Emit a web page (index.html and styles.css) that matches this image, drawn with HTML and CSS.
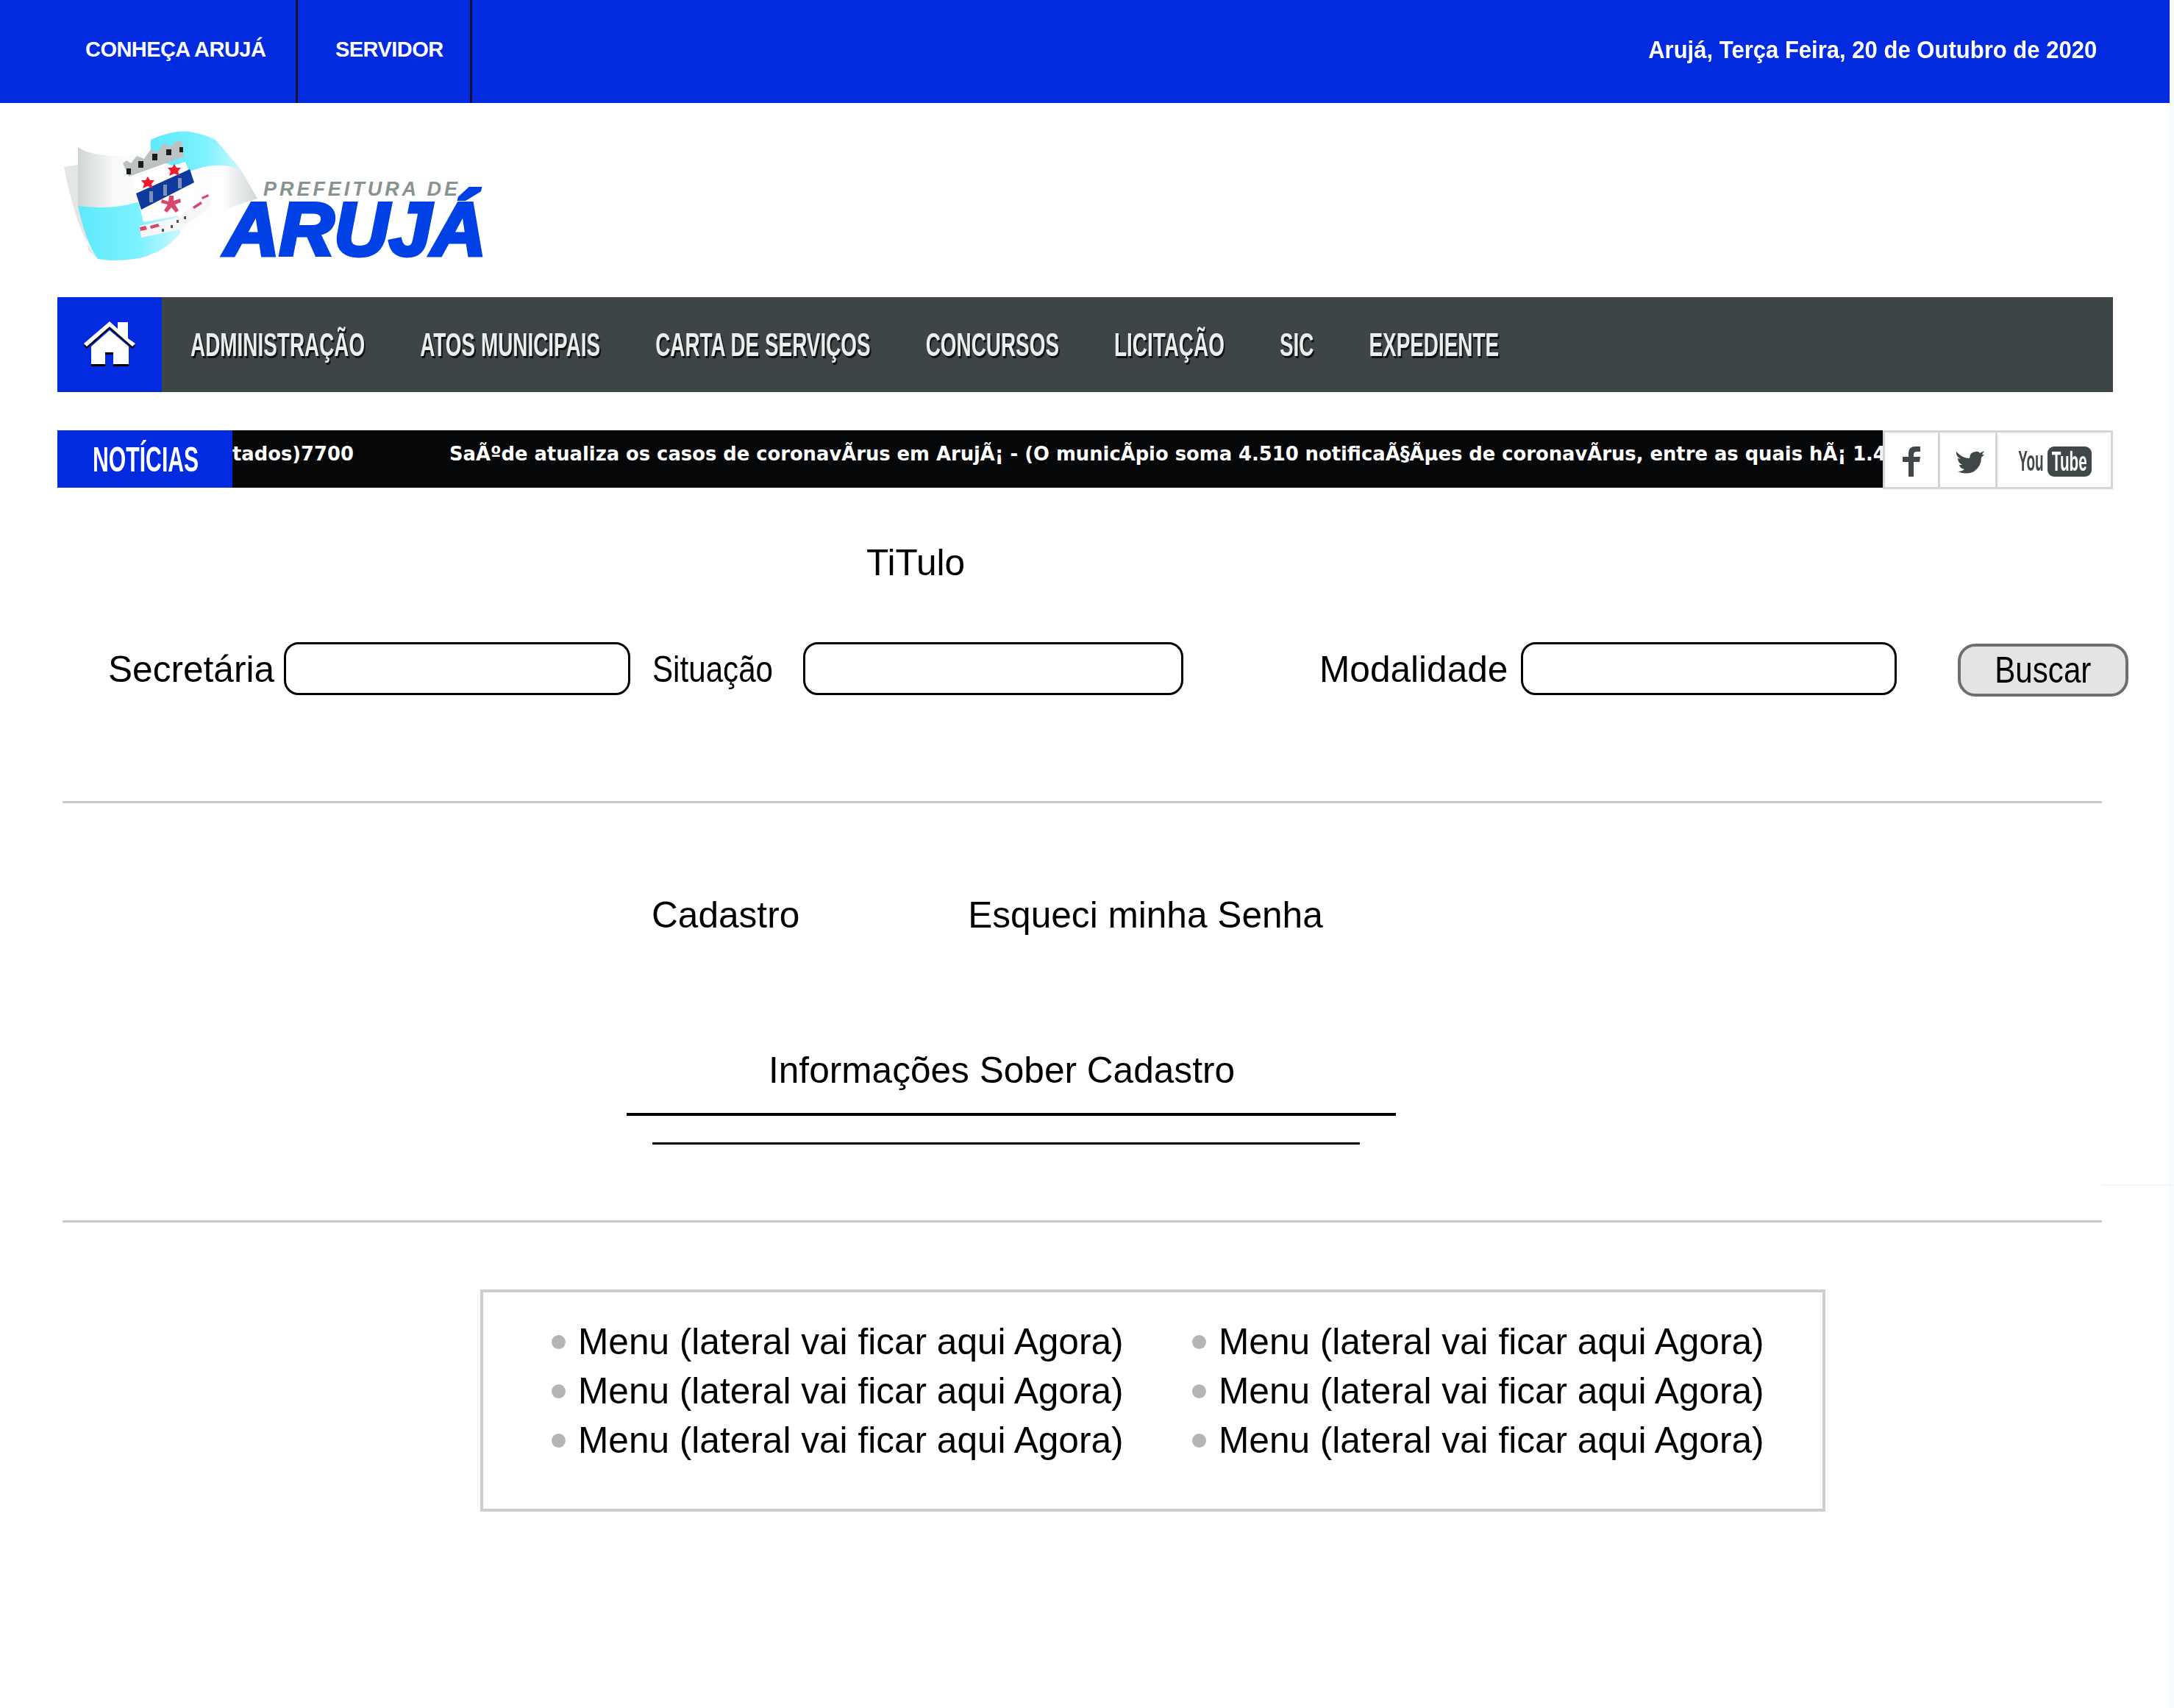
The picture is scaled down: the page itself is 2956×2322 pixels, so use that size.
FILE: index.html
```html
<!DOCTYPE html>
<html lang="pt-BR">
<head>
<meta charset="utf-8">
<title>Prefeitura de Arujá</title>
<link rel="stylesheet" href="styles.css">
</head>
<body>
<div class="faint-line"></div>
<header class="topbar">
  <a class="top-link first">CONHEÇA ARUJÁ</a>
  <a class="top-link second">SERVIDOR</a>
  <span class="top-date">Arujá, Terça Feira, 20 de Outubro de 2020</span>
</header>

<div class="logo-area">
  <svg class="logo" viewBox="80 170 590 200" width="590" height="200">
    <defs>
      <linearGradient id="wg" x1="0" x2="1" y1="0" y2="0">
        <stop offset="0" stop-color="#cfd4d4"/><stop offset=".2" stop-color="#f8f9f9"/><stop offset=".8" stop-color="#ffffff"/><stop offset="1" stop-color="#cfd6d6"/>
      </linearGradient>
      <linearGradient id="cg" x1="0" x2="1" y1="0" y2="0">
        <stop offset="0" stop-color="#5ceafc"/><stop offset=".6" stop-color="#7df1ff"/><stop offset="1" stop-color="#c8f8ff"/>
      </linearGradient>
    </defs>
    <path d="M87 227 L106 224 L120 340 L133 352 Q105 320 87 227Z" fill="#e3e6e6"/>
    <path d="M106 200 Q125 214 180 212 Q205 205 205 190 L253 179 L293 190 L327 230 L350 270 Q315 280 267 303 Q250 312 245 317 Q225 340 207 345 Q190 354 150 354 L133 352 Q118 335 106 280Z" fill="url(#wg)"/>
    <path d="M205 190 Q235 176 258 179 Q282 184 293 190 L327 230 Q295 218 258 233 L205 215Z" fill="url(#cg)"/>
    <path d="M106 280 Q150 286 187 275 L243 292 L245 317 Q225 340 207 345 Q190 354 150 354 L133 352 Q117 330 106 280Z" fill="url(#cg)"/>
    <path d="M180 242 L252 220 L270 267 L243 293 L195 302Z" fill="#ffffff"/>
    <path d="M167 222 L172 218 L178 222 L186 212 L196 216 L205 203 L214 207 L222 195 L232 199 L240 192 L247 192 L250 213 L175 240Z" fill="#bcc2c2"/>
    <g fill="#1c1c1c">
      <rect x="172" y="229" width="6" height="8"/><rect x="188" y="219" width="7" height="9"/><rect x="207" y="209" width="7" height="9"/><rect x="226" y="203" width="7" height="8"/><rect x="244" y="200" width="5" height="7"/>
    </g>
    <path d="M185 263 L258 230 L264 248 L192 285Z" fill="#0d3a9c"/>
    <g fill="#7e8fb8">
      <rect x="203" y="260" width="5" height="15"/><rect x="222" y="251" width="5" height="15"/><rect x="242" y="242" width="5" height="14"/>
    </g>
    <path d="M237 223 l3 5 6 0 -4 5 2 6 -7 -3 -7 3 2 -6 -4 -5 6 0Z" fill="#ee1c2e"/>
    <path d="M201 240 l3 5 6 0 -4 5 2 6 -7 -3 -7 3 2 -6 -4 -5 6 0Z" fill="#ee1c2e"/>
    <path d="M230 266 h6 v7 l9 -3 1 5 -8 3 5 8 -4 3 -6 -7 -6 7 -4 -3 5 -8 -9 -2 1 -5 9 3Z" fill="#d9476b"/>
    <path d="M190 307 L245 295 L282 265 L287 272 L285 282 L245 312 L192 323Z" fill="#f6f6f6"/>
    <path d="M262 281 l11 -7 2 3 -11 7Z M274 268 l9 -4 1 3 -9 4Z M190 309 l8 -2 2 5 -9 2Z M204 307 l11 -3 2 4 -12 3Z" fill="#d9476b"/>
    <g fill="#555"><rect x="220" y="311" width="3" height="4"/><rect x="232" y="306" width="3" height="4"/><rect x="240" y="299" width="3" height="4"/><rect x="250" y="294" width="3" height="4"/></g>
    <text class="logo-small" x="358" y="266" textLength="264" lengthAdjust="spacing">PREFEITURA DE</text>
    <text class="logo-big" x="305" y="347" textLength="356" lengthAdjust="spacingAndGlyphs">ARUJÁ</text>
  </svg>
</div>

<nav class="mainnav">
  <a class="home">
    <svg class="home-icon" viewBox="0 0 70 60" width="70" height="60">
      <path d="M35 0 L46 10 V1 H60 V23 L70 30 L66 34 L35 7 L4 34 L0 30Z"/>
      <path d="M35 12 L61 34 V58 H40 V42 H29 V58 H10 V34Z"/>
    </svg>
  </a>
  <div class="nav-links">
    <a>ADMINISTRAÇÃO</a>
    <a>ATOS MUNICIPAIS</a>
    <a>CARTA DE SERVIÇOS</a>
    <a>CONCURSOS</a>
    <a>LICITAÇÃO</a>
    <a>SIC</a>
    <a>EXPEDIENTE</a>
  </div>
</nav>

<section class="newsrow">
  <div class="news-label"><span>NOTÍCIAS</span></div>
  <div class="ticker">
    <span class="tick-a">tados)7700</span><span class="tick-b">SaÃºde atualiza os casos de coronavÃ­rus em ArujÃ¡ - (O municÃ­pio soma 4.510 notificaÃ§Ãµes de coronavÃ­rus, entre as quais hÃ¡ 1.4</span>
  </div>
  <div class="social">
    <a class="soc soc-f">
      <svg viewBox="0 0 24 41" width="24" height="41"><path d="M8 41 V21 H0 V14 H8 V9 Q8 0 17 0 H24 V7 H19 Q15 7 15 11 V14 H24 L23 21 H15 V41Z"/></svg>
    </a>
    <a class="soc soc-t">
      <svg viewBox="0 0 38 32" width="38" height="32"><path d="M0 2 Q8 11 18 11 Q18 3 26 2 Q30 1 32 4 L38 1 L35 6 L38 6 L34 10 Q34 22 24 29 Q14 34 2 29 Q8 29 11 26 Q5 25 4 20 L8 20 Q2 17 2 11 L6 12 Q-1 8 0 2Z"/></svg>
    </a>
    <a class="soc soc-y">
      <span class="yt-you"><span>You</span></span>
      <span class="yt-tube"><span>Tube</span></span>
    </a>
  </div>
</section>

<h2 class="titulo">TiTulo</h2>

<form class="filters">
  <label class="lbl">Secretária</label>
  <input class="field f1" type="text">
  <label class="lbl narrow l2">Situação</label>
  <input class="field f2" type="text">
  <label class="lbl l3">Modalidade</label>
  <input class="field f3" type="text">
  <button class="buscar" type="button"><span>Buscar</span></button>
</form>

<hr class="rule r1">

<div class="links">
  <a class="lnk">Cadastro</a>
  <a class="lnk lnk2">Esqueci minha Senha</a>
</div>

<p class="info">Informações Sober Cadastro</p>
<div class="line l-a"></div>
<div class="line l-b"></div>

<hr class="rule r2">

<ul class="menubox">
  <li>Menu (lateral vai ficar aqui Agora)</li>
  <li>Menu (lateral vai ficar aqui Agora)</li>
  <li>Menu (lateral vai ficar aqui Agora)</li>
  <li>Menu (lateral vai ficar aqui Agora)</li>
  <li>Menu (lateral vai ficar aqui Agora)</li>
  <li>Menu (lateral vai ficar aqui Agora)</li>
</ul>
</body>
</html>
```
FILE: styles.css
```css
html { background: #f7fbfd; }
body {
  margin: 0;
  width: 2950px;
  min-height: 2322px;
  background: #fff;
  color: #000;
  font-family: "Liberation Sans", Arial, sans-serif;
  font-size: 49.6px;
  overflow: hidden;
}
.faint-line {
  position: absolute;
  left: 2858px;
  top: 1610px;
  width: 98px;
  height: 2px;
  background: #f2f6f6;
}

/* top bar */
.topbar {
  display: flex;
  align-items: center;
  height: 140px;
  background: #022ade;
  color: #fff;
}
.top-link {
  display: flex;
  align-items: center;
  height: 100%;
  box-sizing: border-box;
  padding-bottom: 6px;
  border-right: 3px solid #0a0f2e;
  font-weight: 700;
  font-size: 29px;
  letter-spacing: -.55px;
  white-space: nowrap;
}
.top-link.first { width: 405px; padding-left: 116px; }
.top-link.second { width: 237px; padding-left: 51px; }
.top-date {
  margin: -6px 99px 0 auto;
  font-weight: 700;
  font-size: 34px;
  transform: scaleX(.913);
  transform-origin: right center;
  white-space: nowrap;
}

/* logo */
.logo-area { height: 264px; box-sizing: border-box; padding: 30px 0 0 80px; }
.logo { display: block; }
.logo-small {
  font: italic 700 27px "Liberation Sans", sans-serif;
  fill: #87938f;
}
.logo-big {
  font: italic 700 102px "Liberation Sans", sans-serif;
  fill: #0041e6;
  stroke: #0041e6;
  stroke-width: 5px;
}

/* main nav */
.mainnav {
  display: flex;
  align-items: stretch;
  height: 129px;
  margin-left: 78px;
  width: 2795px;
  background: #3d4547;
  overflow: hidden;
}
.home {
  display: flex;
  align-items: center;
  justify-content: center;
  width: 142px;
  flex: none;
  background: #022ade;
}
.home-icon { fill: #fff; filter: drop-shadow(0 3px 0 #000); margin-top: -4px; }
.nav-links {
  display: flex;
  align-items: center;
  gap: 121px;
  padding-left: 63px;
  transform: scaleX(.62);
  transform-origin: left center;
  font-size: 45px;
  font-weight: 700;
  color: #e9efee;
  text-shadow: 3px 3px 0 #111;
  white-space: nowrap;
}

/* news row */
.newsrow {
  display: flex;
  margin: 52px 0 0 78px;
  width: 2795px;
  height: 80px;
}
.news-label {
  flex: none;
  width: 238px;
  height: 78px;
  box-sizing: border-box;
  padding-left: 48px;
  background: #022ade;
  color: #fff;
  display: flex;
  align-items: center;
  overflow: hidden;
}
.news-label span {
  display: block;
  font-weight: 700;
  font-size: 49px;
  transform: scaleX(.616);
  transform-origin: left center;
  white-space: nowrap;
}
.ticker {
  flex: 1;
  min-width: 0;
  height: 78px;
  background: #060709;
  color: #fff;
  overflow: hidden;
  white-space: nowrap;
  font-family: "DejaVu Sans", sans-serif;
  font-weight: 700;
  font-size: 25.8px;
  line-height: 64px;
}
.tick-a { display: inline-block; width: 295px; }
.social {
  flex: none;
  display: flex;
  width: 313px;
  height: 80px;
  box-sizing: border-box;
  border: 3px solid #cfd8d6;
  fill: #3f4749;
}
.soc {
  display: flex;
  align-items: center;
  justify-content: center;
  box-sizing: border-box;
  height: 100%;
}
.soc svg { margin-top: 5px; }
.soc-f { width: 75px; border-right: 3px solid #cfd8d6; }
.soc-t { width: 78px; border-right: 3px solid #cfd8d6; padding-left: 6px; }
.soc-y {
  flex: 1;
  justify-content: flex-start;
  gap: 5px;
  padding: 5px 0 0 27px;
  font-weight: 700;
  color: #3f4749;
  white-space: nowrap;
}
.yt-you, .yt-tube {
  display: flex;
  align-items: center;
  justify-content: center;
  flex: none;
  overflow: hidden;
}
.yt-you { width: 36px; font-size: 38px; }
.yt-you span { transform: scaleX(.5); }
.yt-tube {
  width: 60px;
  height: 41px;
  font-size: 37px;
  background: #3f4749;
  color: #fff;
  border-radius: 9px;
}
.yt-tube span { transform: scaleX(.56); }

/* title and filters */
.titulo {
  margin: 70px 0 0 1178px;
  font-size: 49.6px;
  font-weight: 400;
  line-height: 60px;
}
.filters {
  display: flex;
  align-items: center;
  height: 74px;
  margin: 78px 0 0 147px;
}
.lbl { white-space: nowrap; }
.narrow {
  display: block;
  width: 164px;
  font-size: 50px;
  transform: scaleX(.843);
  transform-origin: left center;
}
.field {
  box-sizing: border-box;
  height: 72px;
  margin: -2px 0 0 0;
  padding: 0 20px;
  border: 3.5px solid #000;
  border-radius: 20px;
  background: #fff;
}
.f1 { width: 471px; margin-left: 13px; }
.l2 { margin-left: 30px; }
.f2 { width: 517px; margin-left: 41px; }
.l3 { margin-left: 185px; }
.f3 { width: 511px; margin-left: 18px; }
.buscar {
  box-sizing: border-box;
  width: 232px;
  height: 72px;
  margin: 2px 0 0 83px;
  border: 4px solid #6e6e6e;
  border-radius: 24px;
  background: #e4e4e4;
  color: #000;
  font-family: "Liberation Sans", Arial, sans-serif;
  font-size: 50px;
  padding: 0 2px 0 0;
  line-height: 64px;
}
.buscar span { display: inline-block; transform: scaleX(.843); }

.rule {
  margin: 0 0 0 85px;
  width: 2773px;
  height: 3px;
  border: 0;
  background: #cacaca;
}
.r1 { margin-top: 142px; }
.links {
  display: flex;
  margin: 122px 0 0 886px;
  line-height: 60px;
}
.lnk2 { margin-left: 229px; }
.info {
  margin: 151px 0 0 1045px;
  line-height: 60px;
}
.line { background: #000; }
.l-a { margin: 28px 0 0 852px; width: 1046px; height: 4px; }
.l-b { margin: 36px 0 0 887px; width: 962px; height: 3px; }
.r2 { margin-top: 103px; }

/* menu box */
.menubox {
  display: grid;
  grid-template-columns: 871px 1fr;
  grid-auto-flow: column;
  grid-template-rows: repeat(3, 67px);
  box-sizing: border-box;
  width: 1829px;
  height: 302px;
  margin: 91px 0 0 653px;
  padding: 34px 0 0 93px;
  border: 4px solid #cdcdcd;
  list-style: none;
  line-height: 67px;
}
.menubox li {
  display: flex;
  align-items: center;
  white-space: nowrap;
}
.menubox li::before {
  content: "";
  flex: none;
  width: 19px;
  height: 19px;
  margin-right: 17px;
  border-radius: 50%;
  background: #b5b5b5;
}
```
